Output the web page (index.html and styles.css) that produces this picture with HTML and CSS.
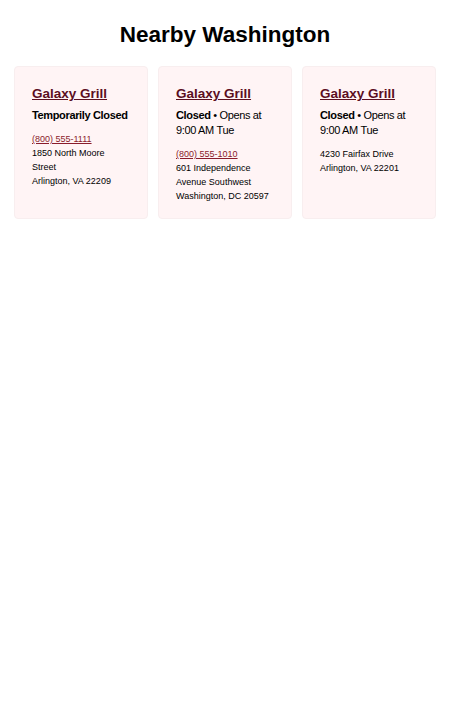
FILE: index.html
```html
<!DOCTYPE html>
<html>
<head>
<meta charset="utf-8">
<link rel="stylesheet" href="styles.css">
</head>
<body>
<main class="page">
  <h1 class="heading">Nearby Washington</h1>
  <div class="cards">
    <section class="card">
      <h2 class="name"><a href="#">Galaxy Grill</a></h2>
      <p class="status"><b>Temporarily Closed</b></p>
      <div class="info">
        <a class="phone" href="#">(800) 555-1111</a>
        <div>1850 North Moore<br>Street</div>
        <div>Arlington, VA 22209</div>
      </div>
    </section>
    <section class="card">
      <h2 class="name"><a href="#">Galaxy Grill</a></h2>
      <p class="status"><b>Closed</b> • Opens at<br>9:00 AM Tue</p>
      <div class="info">
        <a class="phone" href="#">(800) 555-1010</a>
        <div>601 Independence<br>Avenue Southwest</div>
        <div>Washington, DC 20597</div>
      </div>
    </section>
    <section class="card">
      <h2 class="name"><a href="#">Galaxy Grill</a></h2>
      <p class="status"><b>Closed</b> • Opens at<br>9:00 AM Tue</p>
      <div class="info">
        <div>4230 Fairfax Drive</div>
        <div>Arlington, VA 22201</div>
      </div>
    </section>
  </div>
</main>
</body>
</html>
```
FILE: styles.css
```css
* { box-sizing: border-box; }
body {
  margin: 0;
  font-family: "Liberation Sans", Arial, sans-serif;
  color: #000;
  background: #fff;
}
.page { padding: 21px 14px; }
.heading {
  margin: 0 0 17px;
  text-align: center;
  font-size: 22.5px;
  line-height: 28px;
  font-weight: bold;
}
.cards {
  display: grid;
  grid-template-columns: repeat(3, 1fr);
  gap: 10px;
}
.card {
  background: #fff4f5;
  border: 1px solid #f8eeef;
  border-radius: 4px;
  padding: 18px 16px 14px 17px;
  min-height: 153px;
}
.name {
  margin: 0 0 5px;
  font-size: 13.5px;
  line-height: 18px;
  font-weight: bold;
}
.name a { color: #5c0f1f; text-decoration: underline; }
.status {
  margin: 0 0 9px;
  font-size: 11px;
  line-height: 15px;
  letter-spacing: -0.35px;
}
.info {
  font-size: 9px;
  line-height: 14px;
}
.phone {
  display: block;
  color: #8a1c2c;
  text-decoration: underline;
}
```
